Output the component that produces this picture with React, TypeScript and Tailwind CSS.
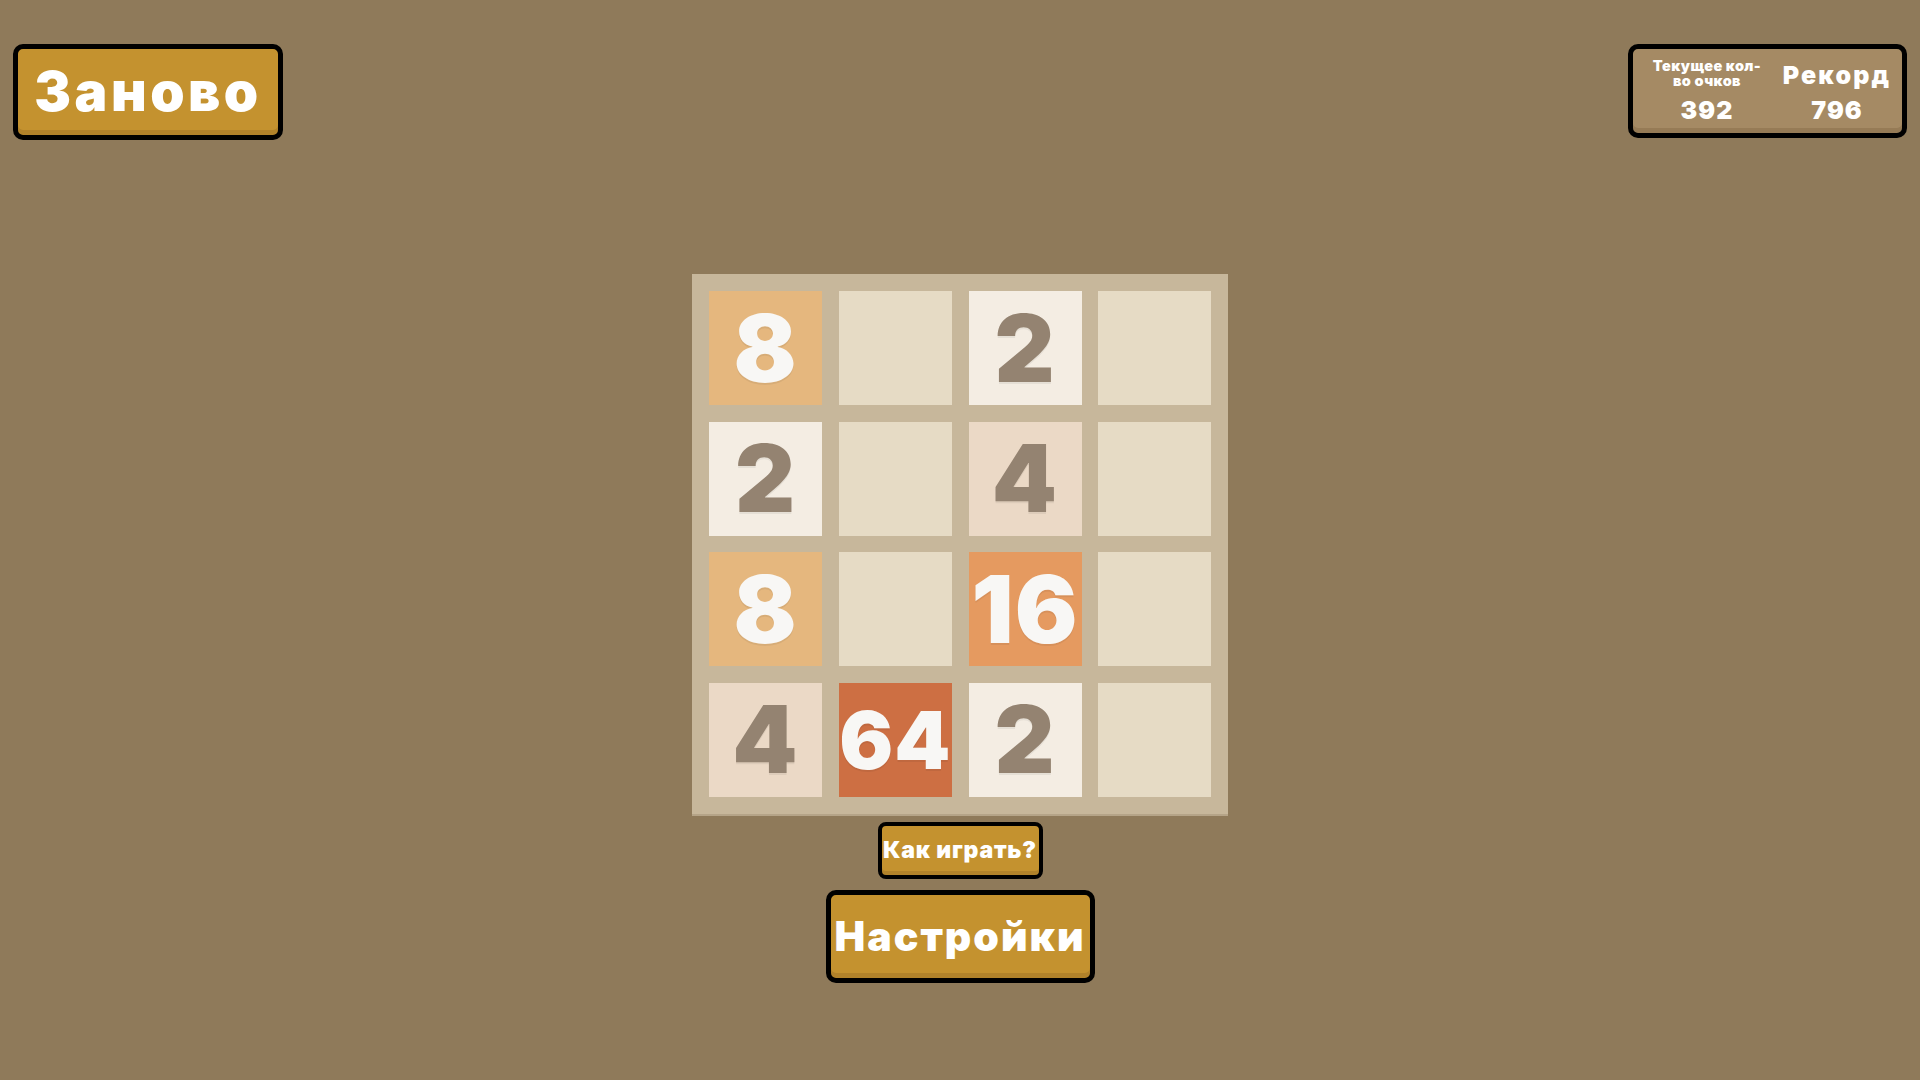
import React from "react";

type Tile = { v: number | null };

const board: (number | null)[][] = [
  [8, null, 2, null],
  [2, null, 4, null],
  [8, null, 16, null],
  [4, 64, 2, null],
];

function tileClass(v: number | null): string {
  switch (v) {
    case 2:
      return "bg-[#F4EDE3] text-[#948371]";
    case 4:
      return "bg-[#EBD9C6] text-[#948371]";
    case 8:
      return "bg-[#E5B77E] text-[#F8F7F5]";
    case 16:
      return "bg-[#E59A60] text-[#F8F7F5]";
    case 64:
      return "bg-[#CD6F43] text-[#F8F7F5]";
    default:
      return "bg-[#E6DBC5]";
  }
}

function Cell({ v }: Tile) {
  const size = v !== null && v >= 64 ? "text-[80px] tracking-[1px]" : "text-[93px] tracking-[1px]";
  return (
    <div
      className={`w-[113px] h-[114px] flex items-center justify-center font-black leading-none ${tileClass(v)} ${size}`}
    >
      {v !== null ? <span className="[text-shadow:0_2px_0_rgba(0,0,0,0.06)]">{v}</span> : null}
    </div>
  );
}

export default function App() {
  return (
    <div
      className="w-[1920px] h-[1080px] bg-[#8F7A5A] flex flex-col overflow-hidden select-none"
      style={{ fontFamily: "Inter, 'Noto Sans', sans-serif" }}
    >
      {/* top bar: restart button and score panel */}
      <div className="flex justify-between items-start px-[13px] pt-[44px]">
        <button className="w-[270px] h-[96px] border-[5px] border-black rounded-[10px] bg-[#C4922F] shadow-[inset_0_-5px_0_#B1822A] flex items-center justify-center">
          <span className="text-white font-black text-[55px] leading-none tracking-[3.5px] pb-[2px]">
            Заново
          </span>
        </button>

        <div className="w-[279px] h-[94px] border-[5px] border-black rounded-[10px] bg-[#A58A64] shadow-[inset_0_-5px_0_#967B56] flex text-white font-black">
          <div className="w-[148px] flex flex-col items-center pt-[9px]">
            <div className="text-[14.5px] leading-[15px] text-center tracking-[0.4px]">
              Текущее кол-
              <br />
              во очков
            </div>
            <div className="text-[25px] leading-none mt-[10px] tracking-[1px]">392</div>
          </div>
          <div className="w-[112px] flex flex-col items-center pt-[14px]">
            <div className="text-[25px] leading-none tracking-[2.2px]">Рекорд</div>
            <div className="text-[25px] leading-none mt-[10px] tracking-[1px]">796</div>
          </div>
        </div>
      </div>

      {/* game board */}
      <div className="flex flex-col items-center mt-[134px]">
        <div className="w-[536px] p-[17px] bg-[#C7B79B] shadow-[0_2px_0_#B5A488] grid grid-cols-4 gap-x-[17px] gap-y-[16.5px]">
          {board.flat().map((v, i) => (
            <Cell key={i} v={v} />
          ))}
        </div>

        <button className="mt-[8px] w-[165px] h-[57px] border-[4px] border-black rounded-[8px] bg-[#C4922F] shadow-[inset_0_-4px_0_#B1822A] flex items-center justify-center">
          <span className="text-white font-black text-[23px] leading-none tracking-[0.8px]">
            Как играть?
          </span>
        </button>

        <button className="mt-[11px] w-[269px] h-[93px] border-[5px] border-black rounded-[10px] bg-[#C4922F] shadow-[inset_0_-5px_0_#B1822A] flex items-center justify-center">
          <span className="text-white font-black text-[41px] leading-none tracking-[2px]">
            Настройки
          </span>
        </button>
      </div>
    </div>
  );
}
